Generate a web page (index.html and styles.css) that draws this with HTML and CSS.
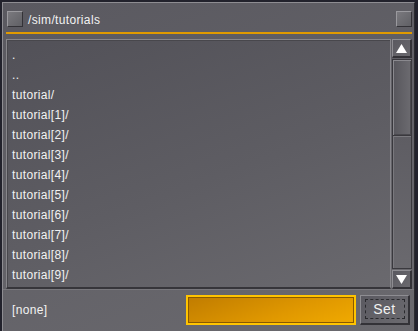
FILE: index.html
```html
<!DOCTYPE html>
<html>
<head>
<meta charset="utf-8">
<link rel="stylesheet" href="styles.css">
</head>
<body>
<div class="window">
  <div class="titlebar">
    <span class="tbox"></span>
    <span class="title">/sim/tutorials</span>
    <span class="tbox right"></span>
  </div>
  <div class="rule"></div>
  <div class="main">
    <div class="list">
      <div class="item">.</div>
      <div class="item">..</div>
      <div class="item">tutorial/</div>
      <div class="item">tutorial[1]/</div>
      <div class="item">tutorial[2]/</div>
      <div class="item">tutorial[3]/</div>
      <div class="item">tutorial[4]/</div>
      <div class="item">tutorial[5]/</div>
      <div class="item">tutorial[6]/</div>
      <div class="item">tutorial[7]/</div>
      <div class="item">tutorial[8]/</div>
      <div class="item">tutorial[9]/</div>
    </div>
    <div class="scroll">
      <div class="sbtn"><svg width="11" height="9" viewBox="0 0 11 9"><polygon points="5.5,0 11,9 0,9" fill="#fff"/></svg></div>
      <div class="thumb"></div>
      <div class="track"></div>
      <div class="sbtn"><svg width="11" height="9" viewBox="0 0 11 9"><polygon points="0,0 11,0 5.5,9" fill="#fff"/></svg></div>
    </div>
  </div>
  <div class="bottom">
    <span class="none">[none]</span>
    <div class="field"></div>
    <div class="setbtn"><span class="focus">Set</span></div>
  </div>
</div>
</body>
</html>
```
FILE: styles.css
```css
html, body {
  margin: 0;
  padding: 0;
}
body {
  background: #22222c;
  width: 418px;
  height: 331px;
  overflow: hidden;
  font-family: "Liberation Sans", Arial, sans-serif;
  font-size: 12px;
  letter-spacing: 0.35px;
  color: #f2f2f2;
}
.window {
  margin: 2px 3px 0 2px;
  height: 329px;
  box-sizing: border-box;
  border-top: 1px solid #8e8d92;
  border-left: 1px solid #8e8d92;
  border-right: 1px solid #2c2c30;
  background: linear-gradient(160deg, #5a5960 0%, #626167 50%, #6a696e 100%);
  display: flex;
  flex-direction: column;
}
.titlebar {
  height: 28px;
  display: flex;
  align-items: center;
  padding: 0 2px 0 4px;
}
.tbox {
  width: 14px;
  height: 14px;
  border-top: 1px solid #9a999e;
  border-left: 1px solid #9a999e;
  border-right: 1px solid #333237;
  border-bottom: 1px solid #333237;
  background: linear-gradient(135deg, #7a797e, #606065);
  margin-top: 4px;
}
.title {
  margin-left: 5px;
  flex: 1;
  margin-top: 5px;
}
.rule {
  height: 2px;
  margin: 1px 2px 0 3px;
  background: #e09a00;
}
.main {
  display: flex;
  margin: 5px 2px 0 3px;
  height: 250px;
}
.list {
  flex: 1;
  box-sizing: border-box;
  border-top: 1px solid #87868b;
  border-left: 1px solid #87868b;
  border-right: 1px solid #87868b;
  border-bottom: 2px solid #36353a;
  box-shadow: inset 1px 1px 0 #48474c;
  background: linear-gradient(160deg, #525158 0%, #5e5d63 55%, #6a696e 100%);
  padding: 5px 0 0 5px;
}
.item {
  height: 20px;
  line-height: 20px;
}
.scroll {
  width: 20px;
  margin-left: 1px;
  display: flex;
  flex-direction: column;
}
.sbtn {
  height: 19px;
  box-sizing: border-box;
  border-top: 1px solid #8e8d92;
  border-left: 1px solid #8e8d92;
  border-right: 2px solid #333237;
  border-bottom: 2px solid #333237;
  background: linear-gradient(135deg, #5a5960, #6a696e);
  display: flex;
  align-items: center;
  justify-content: center;
}
.thumb {
  height: 76px;
  margin-top: 1px;
  box-sizing: border-box;
  border-left: 1px solid #3a393e;
  border-top: 1px solid #3a393e;
  border-right: 1px solid #3a393e;
  box-shadow: inset 1px 1px 0 #8a898e, inset -1px -1px 0 #4a494e;
  background: linear-gradient(90deg, #57565c, #6c6b70);
}
.track {
  flex: 1;
  box-sizing: border-box;
  border: 1px solid #3a393e;
  box-shadow: inset 1px 1px 0 #7a797e;
  background: linear-gradient(180deg, #5e5d63, #6a696e);
  margin-bottom: 1px;
}
.bottom {
  flex: 1;
  display: flex;
  align-items: center;
  padding: 0 3px 2px 9px;
  border-top: 1px solid #78777c;
}
.none {
  width: 174px;
}
.field {
  width: 166px;
  height: 26px;
  border: 2px solid #ffc400;
  box-shadow: inset 1px 1px 0 #8a5a00, inset -1px -1px 0 #8a5a00;
  background: linear-gradient(160deg, #c07c00 0%, #e09800 60%, #f0aa00 100%);
}
.setbtn {
  margin-left: 4px;
  width: 50px;
  height: 30px;
  box-sizing: border-box;
  border-top: 1px solid #8e8d92;
  border-left: 1px solid #8e8d92;
  border-right: 2px solid #333237;
  border-bottom: 2px solid #333237;
  background: linear-gradient(135deg, #5a5960, #6c6b70);
  display: flex;
  align-items: center;
  justify-content: center;
}
.focus {
  width: 38px;
  height: 18px;
  border: 1px dashed #2a2a2e;
  display: flex;
  align-items: center;
  justify-content: center;
  font-size: 14px;
  letter-spacing: 0.5px;
}
```
